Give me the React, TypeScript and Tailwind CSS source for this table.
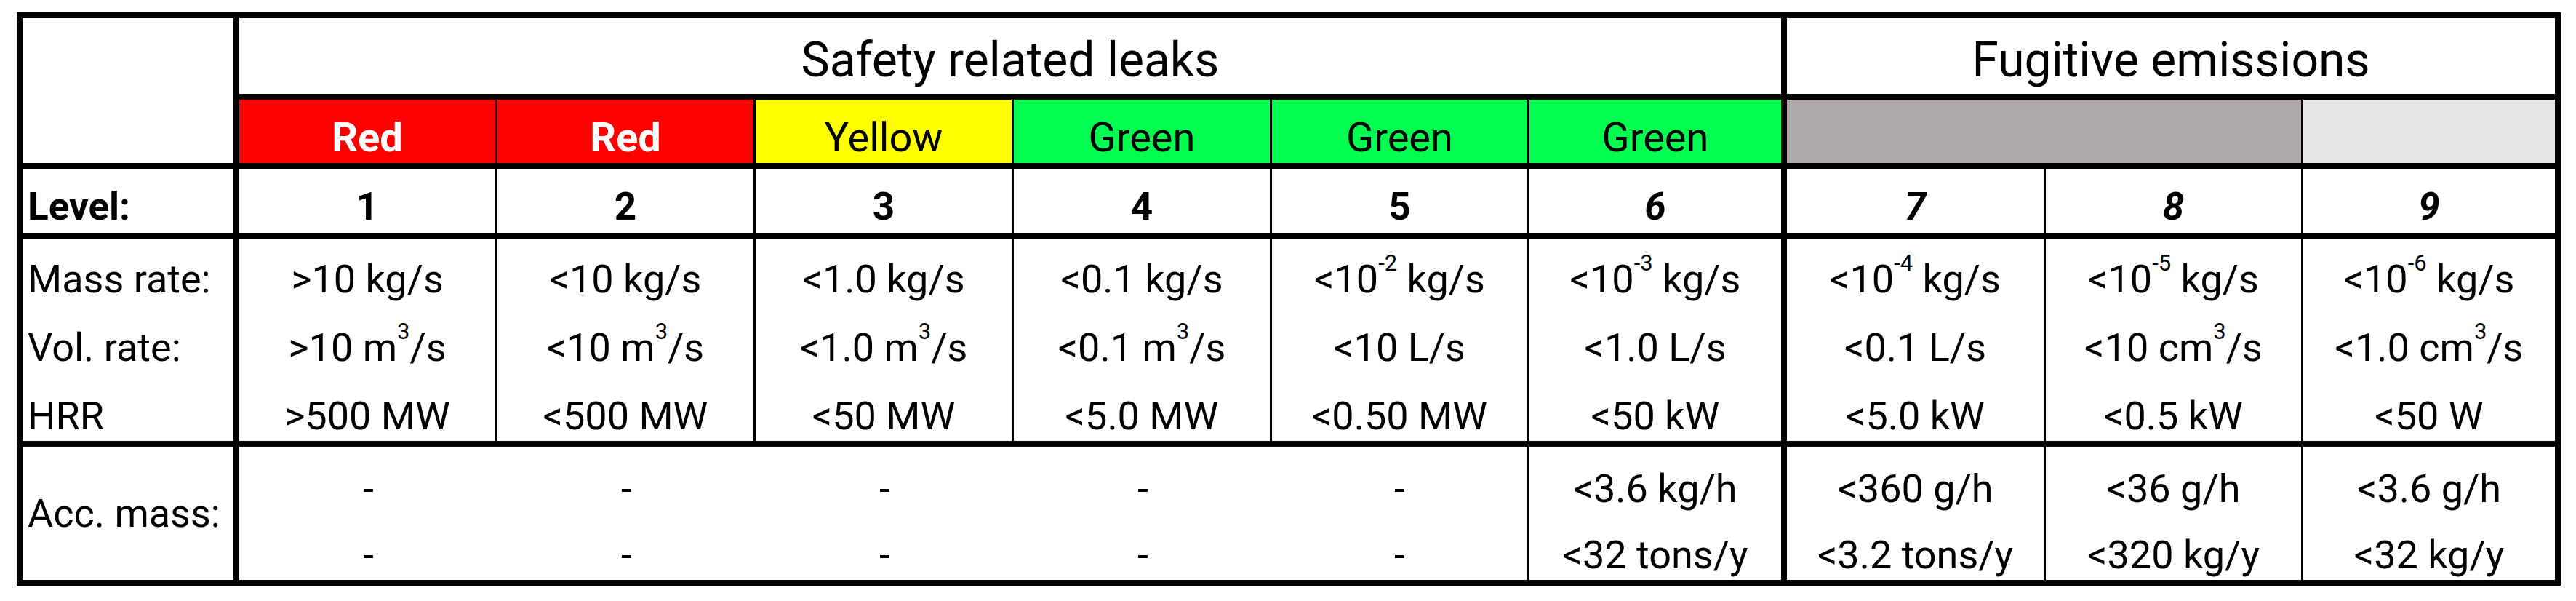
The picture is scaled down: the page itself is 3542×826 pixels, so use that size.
import React from "react";
import type { ReactNode } from "react";

// superscript exponent, raised to sit above the cap height like Excel does
function Sup({ children }: { children: ReactNode }) {
  return <span className="align-[30px] text-[31px] leading-none">{children}</span>;
}

type Level = {
  level: string;
  italic: boolean;
  border: string;
  accBorder: string;
  mass: ReactNode;
  vol: ReactNode;
  hrr: string;
  acc: [string, string];
};

const LEVELS: Level[] = [
  {
    level: "1",
    italic: false,
    border: "border-r-[3px]",
    accBorder: "",
    mass: ">10 kg/s",
    vol: <>&gt;10 m<Sup>3</Sup>/s</>,
    hrr: ">500 MW",
    acc: ["-", "-"],
  },
  {
    level: "2",
    italic: false,
    border: "border-r-[3px]",
    accBorder: "",
    mass: "<10 kg/s",
    vol: <>&lt;10 m<Sup>3</Sup>/s</>,
    hrr: "<500 MW",
    acc: ["-", "-"],
  },
  {
    level: "3",
    italic: false,
    border: "border-r-[3px]",
    accBorder: "",
    mass: "<1.0 kg/s",
    vol: <>&lt;1.0 m<Sup>3</Sup>/s</>,
    hrr: "<50 MW",
    acc: ["-", "-"],
  },
  {
    level: "4",
    italic: false,
    border: "border-r-[3px]",
    accBorder: "",
    mass: "<0.1 kg/s",
    vol: <>&lt;0.1 m<Sup>3</Sup>/s</>,
    hrr: "<5.0 MW",
    acc: ["-", "-"],
  },
  {
    level: "5",
    italic: false,
    border: "border-r-[3px]",
    accBorder: "border-r-[3px]",
    mass: <>&lt;10<Sup>-2</Sup> kg/s</>,
    vol: "<10 L/s",
    hrr: "<0.50 MW",
    acc: ["-", "-"],
  },
  {
    level: "6",
    italic: true,
    border: "border-r-8",
    accBorder: "border-r-8",
    mass: <>&lt;10<Sup>-3</Sup> kg/s</>,
    vol: "<1.0 L/s",
    hrr: "<50 kW",
    acc: ["<3.6 kg/h", "<32 tons/y"],
  },
  {
    level: "7",
    italic: true,
    border: "border-r-[3px]",
    accBorder: "border-r-[3px]",
    mass: <>&lt;10<Sup>-4</Sup> kg/s</>,
    vol: "<0.1 L/s",
    hrr: "<5.0 kW",
    acc: ["<360 g/h", "<3.2 tons/y"],
  },
  {
    level: "8",
    italic: true,
    border: "border-r-[3px]",
    accBorder: "border-r-[3px]",
    mass: <>&lt;10<Sup>-5</Sup> kg/s</>,
    vol: <>&lt;10 cm<Sup>3</Sup>/s</>,
    hrr: "<0.5 kW",
    acc: ["<36 g/h", "<320 kg/y"],
  },
  {
    level: "9",
    italic: true,
    border: "border-r-8",
    accBorder: "border-r-8",
    mass: <>&lt;10<Sup>-6</Sup> kg/s</>,
    vol: <>&lt;1.0 cm<Sup>3</Sup>/s</>,
    hrr: "<50 W",
    acc: ["<3.6 g/h", "<32 kg/y"],
  },
];

const BANDS = [
  { label: "Red", className: "col-span-1 border-r-[3px] bg-[#ff0000] font-bold text-white" },
  { label: "Red", className: "col-span-1 border-r-[3px] bg-[#ff0000] font-bold text-white" },
  { label: "Yellow", className: "col-span-1 border-r-[3px] bg-[#ffff00]" },
  { label: "Green", className: "col-span-1 border-r-[3px] bg-[#00ff50]" },
  { label: "Green", className: "col-span-1 border-r-[3px] bg-[#00ff50]" },
  { label: "Green", className: "col-span-1 border-r-8 bg-[#00ff50]" },
  { label: "", className: "col-span-2 border-r-[3px] bg-[#aeaaaa]" },
  { label: "", className: "col-span-1 border-r-8 bg-[#e7e6e6]" },
];

export default function App() {
  return (
    <div className="min-h-[826px] bg-white pl-[23px] pt-[17px] font-[Roboto,sans-serif] text-black">
      <div className="grid w-fit grid-cols-[298px_355px_355px_355px_355px_354px_354px_356px_354px_354px] grid-rows-[112px_95px_96px_286px_191px] border-l-8 border-t-8 border-black whitespace-nowrap">
        {/* header */}
        <div className="row-span-2 border-r-8 border-b-8 border-black" />
        <div className="col-span-6 flex items-end justify-center border-r-8 border-b-8 border-black pb-[13px] text-[66px] leading-none">
          Safety related leaks
        </div>
        <div className="col-span-3 flex items-end justify-center border-r-8 border-b-8 border-black pb-[13px] text-[66px] leading-none">
          Fugitive emissions
        </div>

        {/* colour bands */}
        {BANDS.map((band, i) => (
          <div
            key={i}
            className={`flex items-end justify-center border-b-8 border-black pb-[7px] text-[56px] leading-none ${band.className}`}
          >
            {band.label}
          </div>
        ))}

        {/* level row */}
        <div className="flex items-end border-r-8 border-b-8 border-black pb-[9px] pl-[7px] text-[53px] font-bold leading-none">
          Level:
        </div>
        {LEVELS.map((l) => (
          <div
            key={l.level}
            className={`flex items-end justify-center border-b-8 border-black pb-[9px] text-[53px] font-bold leading-none ${l.border} ${l.italic ? "italic" : ""}`}
          >
            {l.level}
          </div>
        ))}

        {/* rates */}
        <div className="flex flex-col items-start border-r-8 border-b-8 border-black pl-[7px] pt-[9px] text-[54px] leading-[94px]">
          <div>Mass rate:</div>
          <div>Vol. rate:</div>
          <div>HRR</div>
        </div>
        {LEVELS.map((l) => (
          <div
            key={l.level}
            className={`flex flex-col items-center border-b-8 border-black pt-[9px] text-[54px] leading-[94px] ${l.border}`}
          >
            <div>{l.mass}</div>
            <div>{l.vol}</div>
            <div>{l.hrr}</div>
          </div>
        ))}

        {/* accumulated mass */}
        <div className="flex items-center border-r-8 border-b-8 border-black pl-[7px] text-[54px] leading-none">
          Acc. mass:
        </div>
        {LEVELS.map((l) => (
          <div
            key={l.level}
            className={`flex flex-col items-center border-b-8 border-black pt-[12px] text-[54px] leading-[91px] ${l.accBorder}`}
          >
            <div>{l.acc[0]}</div>
            <div>{l.acc[1]}</div>
          </div>
        ))}
      </div>
    </div>
  );
}
